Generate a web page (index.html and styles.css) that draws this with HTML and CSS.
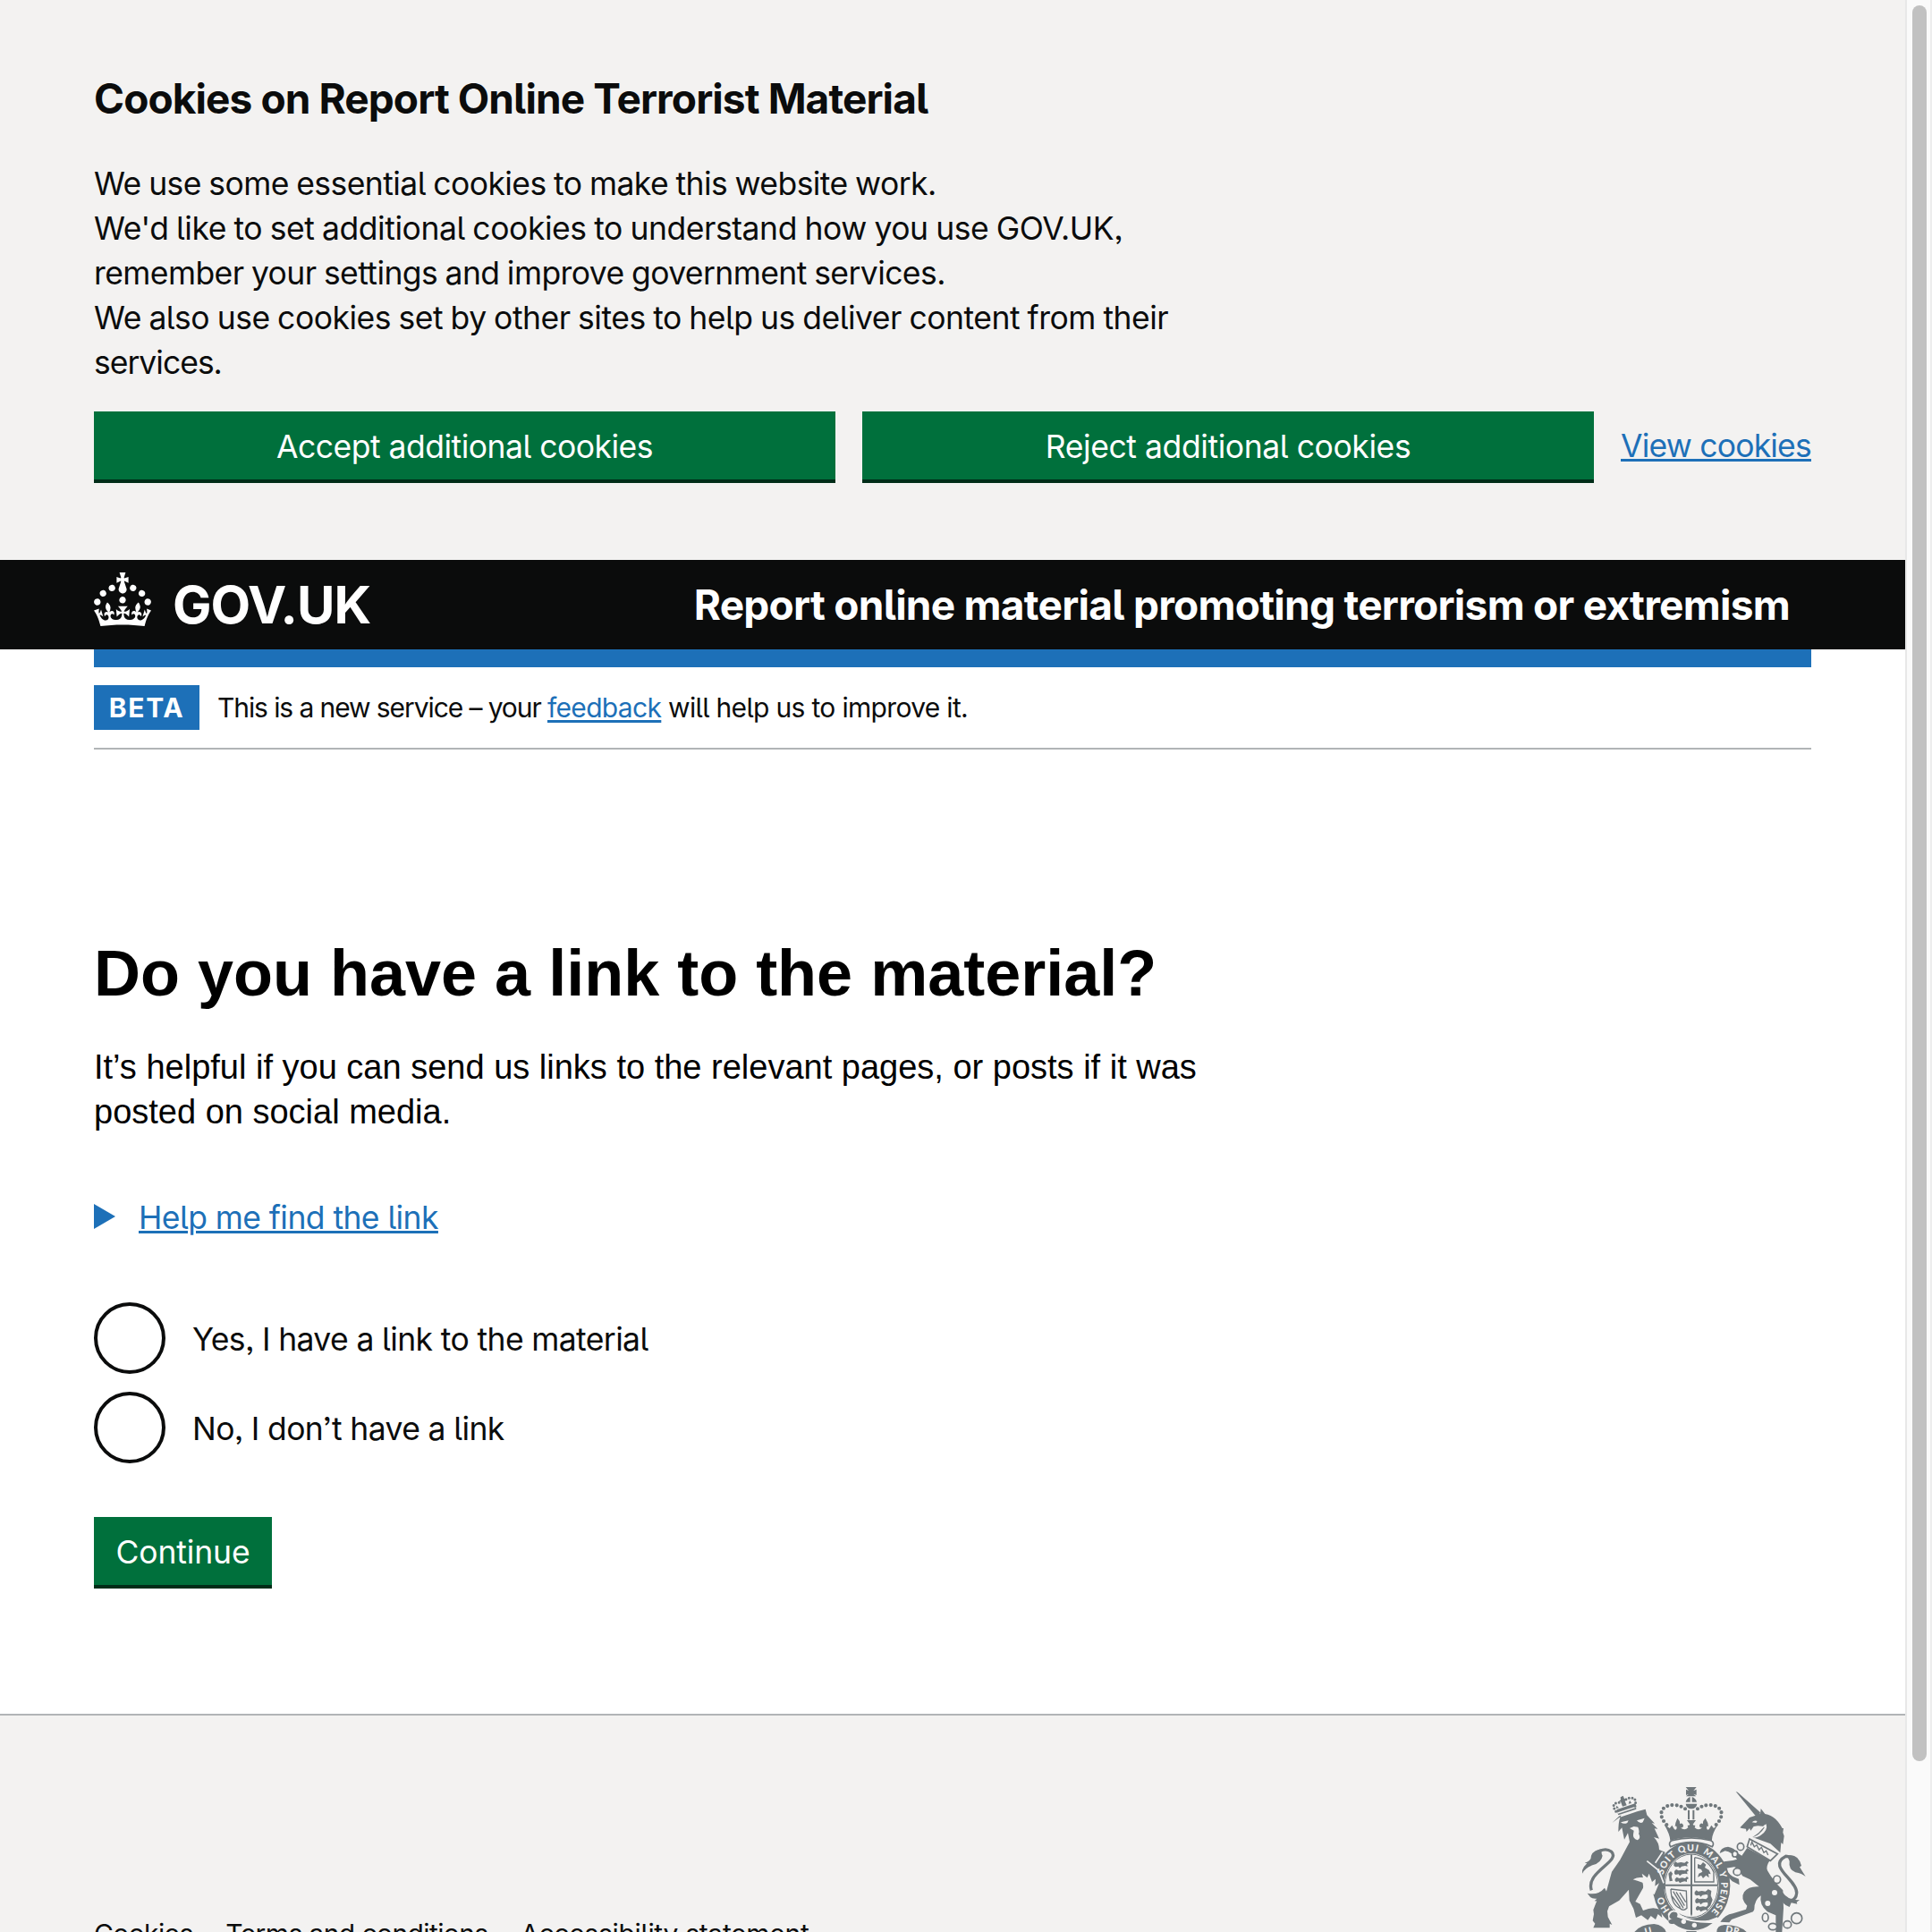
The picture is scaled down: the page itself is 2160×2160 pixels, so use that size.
FILE: index.html
```
<!DOCTYPE html>
<html lang="en">
<head>
<meta charset="utf-8">
<title>Do you have a link to the material?</title>
<link rel="stylesheet" href="styles.css">
</head>
<body>
<div class="page">
  <section class="cookies">
    <h2 class="cookies-title">Cookies on Report Online Terrorist Material</h2>
    <p class="cookies-text">
      <span class="line l1">We use some essential cookies to make this website work.</span>
      <span class="line l2">We'd like to set additional cookies to understand how you use GOV.UK,</span>
      <span class="line l3">remember your settings and improve government services.</span>
      <span class="line l4">We also use cookies set by other sites to help us deliver content from their</span>
      <span class="line l5">services.</span>
    </p>
    <div class="cookies-actions">
      <button class="button accept">Accept additional cookies</button>
      <button class="button reject">Reject additional cookies</button>
      <a class="link view" href="#">View cookies</a>
    </div>
  </section>

  <header class="header">
    <a class="logo" href="#">
      <svg class="crown" viewBox="0 0 32 30" fill="currentColor" aria-hidden="true"><path d="M22.6 10.4c-1 .4-2-.1-2.4-1-.4-.9.1-2 1-2.4.9-.4 2 .1 2.4 1s-.1 2-1 2.4m-5.9 6.7c-.9.4-2-.1-2.4-1-.4-.9.1-2 1-2.4.9-.4 2 .1 2.4 1s-.1 2-1 2.4m10.8-3.7c-1 .4-2-.1-2.4-1-.4-.9.1-2 1-2.4.9-.4 2 .1 2.4 1s0 2-1 2.4m3.3 4.8c-1 .4-2-.1-2.4-1-.4-.9.1-2 1-2.4.9-.4 2 .1 2.4 1s-.1 2-1 2.4M17 4.7l2.3 1.2V2.5l-2.3.7-.2-.2.9-3h-3.4l.9 3-.2.2c-.1.1-2.3-.7-2.3-.7v3.4L15 4.7c.1.1.1.2.2.2l-1.3 4c-.1.2-.1.4-.1.6 0 1.1.8 2 1.9 2.2h.7c1-.2 1.9-1.1 1.9-2.1 0-.2 0-.4-.1-.6l-1.3-4c-.1-.2 0-.2.1-.3m-7.6 5.7c.9.4 2-.1 2.4-1 .4-.9-.1-2-1-2.4-.9-.4-2 .1-2.4 1s0 2 1 2.4m-5 3c.9.4 2-.1 2.4-1 .4-.9-.1-2-1-2.4-.9-.4-2 .1-2.4 1s.1 2 1 2.4m-3.2 4.8c.9.4 2-.1 2.4-1 .4-.9-.1-2-1-2.4-.9-.4-2 .1-2.4 1s0 2 1 2.4m14.8 11c4.4 0 8.6.3 12.3.8 1.1-4.5 2.4-7 3.7-8.8l-2.5-.9c.2 1.3.3 1.9 0 2.7-.4-.4-.8-1.1-1.1-2.3l-1.2 4c.7-.5 1.3-.8 2-.9-1.1 2.5-2.6 3.1-3.5 3-1.1-.2-1.7-1.2-1.5-2.1.3-1.2 1.5-1.5 2.1-.1 1.1-2.3-.8-3-2-2.3 1.9-1.9 2.1-3.5.6-5.6-2.1 1.6-2.1 3.2-1.2 5.5-1.2-1.4-3.2-.6-2.5 1.6.9-1.4 2.1-.5 1.9.8-.2 1.1-1.7 2.1-3.5 1.9-2.7-.2-2.9-2.1-2.9-3.6.7-.1 1.9.5 2.9 1.9l.4-4.3c-1.1 1.1-2.1 1.4-3.2 1.4.4-1.2 2.1-3 2.1-3h-5.4s1.7 1.9 2.1 3c-1.1 0-2.1-.2-3.2-1.4l.4 4.3c1-1.4 2.2-2 2.9-1.9-.1 1.5-.2 3.4-2.9 3.6-1.9.2-3.4-.8-3.5-1.9-.2-1.3 1-2.2 1.9-.8.7-2.3-1.2-3-2.5-1.6.9-2.2.9-3.9-1.2-5.5-1.5 2-1.3 3.7.6 5.6-1.2-.7-3.1 0-2 2.3.6-1.4 1.8-1.1 2.1.1.2.9-.3 1.9-1.5 2.1-.9.2-2.4-.5-3.5-3 .6 0 1.2.3 2 .9l-1.2-4c-.3 1.1-.7 1.9-1.1 2.3-.3-.8-.2-1.4 0-2.7l-2.9.9C1.3 23 2.6 25.5 3.7 30c3.7-.5 7.9-.8 12.3-.8"/></svg>
      <span class="logo-text">GOV.UK</span>
    </a>
    <span class="service">Report online material promoting terrorism or extremism</span>
  </header>

  <div class="container">
    <div class="phase">
      <strong class="tag">BETA</strong>
      <span class="phase-text"><span class="phase-start">This is a new service – your </span><a class="link" href="#">feedback</a> will help us to improve it.</span>
    </div>
    <main class="main">
      <h1 class="title">Do you have a link to the material?</h1>
      <p class="lead">It’s helpful if you can send us links to the relevant pages, or posts if it was posted on social media.</p>
      <div class="details">
        <svg class="arrow" viewBox="0 0 24 28" aria-hidden="true"><path d="M0 0L24 14L0 28Z" fill="currentColor"/></svg>
        <a class="link help" href="#">Help me find the link</a>
      </div>
      <div class="radios">
        <label class="radio"><span class="ring"></span><span class="radio-text">Yes, I have a link to the material</span></label>
        <label class="radio"><span class="ring"></span><span class="radio-text">No, I don’t have a link</span></label>
      </div>
      <button class="button continue">Continue</button>
    </main>
  </div>

  <footer class="footer">
    <nav class="footer-links">
      <a href="#">Cookies</a>
      <a href="#">Terms and conditions</a>
      <a href="#" class="statement">Accessibility statement</a>
    </nav>
    <svg class="arms" viewBox="87 288 756 492" aria-hidden="true">
      <defs>
        <path id="garter" d="M453 742C398 742 353 690 353 625S398 508 453 508S553 560 553 625S508 742 453 742"/>
        <g id="lions">
          <path d="M0 8l6-6 6 4 12-2 12 2 8-6 6 6-6 4 2 8-8-2-12 2-6 6-4-6-10 2-6-4zM2 34l6-6 8 4 10-2 12 2 6-6 6 6-6 4 2 8-8-2-10 2-8 6-4-6-10 2-4-4zM4 60l6-6 8 4 10-2 10 2 6-6 6 6-6 4 0 8-8-2-8 2-8 4-4-6-8 2-4-4z"/>
        </g>
      </defs>
      <g class="ink">
        <!-- garter, quartered shield -->
        <ellipse cx="453" cy="625" rx="130" ry="147"/>
        <ellipse class="gap" cx="453" cy="625" rx="92" ry="109"/>
        <ellipse class="ring-line" cx="453" cy="625" rx="89" ry="106"/>
        <path d="M450 520h6v200l-3 8-3-8zM366 620h174v6H366z"/>
        <use href="#lions" x="394" y="542"/>
        <use href="#lions" x="464" y="638"/>
        <path d="M376 584l8-8 6 8-4 10 4 14-10 2z"/>
        <path d="M508 636l12 6-2 16 6 14-8 22-8 2z"/>
        <path class="hair" d="M464 530V612H528V580Q510 536 464 530M384 636L436 642L438 700Q426 712 414 700Q386 690 384 636M392 644L426 700M402 646L430 692M414 648L434 680M388 660L416 698"/>
        <path d="M474 552l10 4 8-10 10 8-4 10 14 8 6 14-8-2 2 14-10-8-10 10-6-10-12 6 4-12 12-6-4-8-12-4z"/>
        <!-- garter buckle -->
        <path class="gap" d="M374 720Q384 702 408 710L416 722Q460 748 512 740L540 730L548 744L516 764L480 778H420L378 752Z"/>
        <path d="M380 724Q386 708 402 714Q410 720 404 730Q456 752 524 750Q490 776 456 774Q420 772 394 752Q378 756 376 744Q380 736 390 738Q376 734 380 724Z"/>
        <circle class="gap" cx="427" cy="745" r="8"/><circle class="gap" cx="463" cy="757" r="8"/>
        <!-- crown -->
        <path d="M434 294h36l-10 12 10-4v19l-10-4 9 8h-34l9-8-9 4v-19l9 4zM434 344q4-14 15-17v17zM471 344q-4-14-16-17v17zM434 350h38q-2 16-19 17-17-1-19-17zM441 371h6v32h-6zM457 371h6v32h-6zM364 420l16 12 8-10 8 14q8 4 8-6 0-8-6-4l2-12 6-16q10 10 8 20 8-6 12 4 0 10-10 8 14 12 26 0l-2-8h26l-2 8q12 12 26 0-10 2-10-8 4-10 12-4-2-10 8-20l8 16 2 12q-6-4-6 4 0 10 8 6l8-14 8 10 14-12q-22 34-20 54-74-22-140 0 0-20-20-54zM438 405h30l-10 14 8 8h-26l8-8z"/>
        <path class="gap band" d="M388 473Q453 456 518 473Q532 480 523 494Q453 464 383 494Q374 480 388 473Z"/>
        <path class="beads" d="M370 420C340 390 348 356 390 354Q418 354 436 370M536 420C566 390 558 356 516 354Q488 354 470 370"/>
        <!-- lion -->
        <path d="M187 414l24-18 60-20 28-8 5 20 26 28-10-2 20 20-11-1 16 34-18-5q18 18 18 42l20 8-12 32 8 28 4 60-16 20-20 2-10-14 4-8-20-2 4-10-14-6 14-14-22-2q8 20 6 34l-26 46 16 8 10 22q38-16 60 0l4 24-14-12-8 18-16-12-10 14-22-16-18 8-8-30-14-28-2-36-32 36-34 20-6 16 2 20 14 26-8-4 0 14H124l6-14-8-10 4-22-2-14 14-36 26-12 22-80 28-40 32-60-6-30-12 22-8-40-12 14q0-42 10-56l-8 4z"/>
        <path class="gap" d="M257 604q18-10 34-6l-4-14 18 14 6-14 10 28 12-10-2 24 14-10-16 38-12-4-14-18-14-18q-14-4-32-10zM216 412l26-6-4 8q-12 6-22-2zM270 406l26-8-6 14q-10 6-20-6zM246 432l14-6 14 2q6 16 2 22 10 16-4 22-16-6-14-20l2-12z"/>
        <path class="cut" d="M304 542l40 32 16 42M332 548l24-36"/>
        <path d="M202 370l64-22 2 20-60 20zM215 328l9-5 4 10 8 2-6 6 6 14-14 4-6-16-6-2 6-4zM200 366l2-10 8 8zM242 350l4-12 6 10z"/>
        <path class="cut thin" d="M206 381l60-20"/>
        <path class="beads small" d="M200 376Q182 350 206 346L216 346M264 358Q272 328 246 330L232 336"/>
        <path class="tail" d="M118 640C96 578 220 542 184 510Q168 498 146 508"/>
        <path class="tailfill" d="M87 584q-4-16 16-34l-8-2q22-6 22-24 8-20 36-22-4 12 2 22-4 24-34 32-26 10-34 28zM104 650q36 8 58-18l10 20q-12 26-44 24l8-8q-20 2-26-10z"/>
        <!-- unicorn -->
        <path d="M602 309l6 2 76 68-4 14-8 2zM616 430l32-34 36-12 2-18 14 18q34 4 58 48l4 0-2 14 4 12-4 28-6-6-3 34-33-30-60-22 20-14 20-22-22-2-14 2-10 14-4-8-10 12-2-10-14-2z"/>
        <path class="gap" d="M656 412q8-8 18-4l-4 6zM694 424l10-6q6 20-16 36-14 12-36 10 30-6 46-34z"/>
        <path d="M640 498L716 540Q702 560 708 574Q728 610 760 640L762 700L757 780H736V724L708 712Q680 690 686 658Q664 672 664 704L660 712L588 738L580 748L550 746Q566 722 592 718L636 704L640 692Q616 668 630 646Q644 626 680 628L650 604L624 592Q608 560 596 562L570 566Q572 580 592 594L612 602L614 622L590 610Q560 580 556 562L562 544L592 540L606 536Q590 512 566 508L548 516Q550 496 576 494Q598 498 606 514L622 524Z"/>
        <path class="gap line3" d="M648 468L640 494L718 541L742 518Z"/>
        <path class="hair" d="M652 490l4-12 8 16 8-6 8 16 8-8 8 18 8-6 6 14"/>
        <circle class="gap" cx="732" cy="648" r="9"/><circle class="gap" cx="709" cy="684" r="9"/>
        <g class="gap rings"><ellipse cx="618" cy="494" rx="11" ry="12"/><ellipse cx="599" cy="518" rx="9" ry="10"/><ellipse cx="607" cy="578" rx="13" ry="12"/><ellipse cx="740" cy="604" rx="12" ry="13"/><ellipse cx="701" cy="731" rx="10" ry="14"/><ellipse cx="726" cy="762" rx="14" ry="11"/><ellipse cx="775" cy="755" rx="13" ry="12"/><circle cx="806" cy="734" r="18"/></g>
        <path class="tail" d="M786 674Q804 672 806 650C810 606 704 560 770 526L796 530"/>
        <path d="M774 524q38-8 48 34l-6 4 20 32q-12-10-34-14-24-10-20-38zM758 646q20 30 58 26l-10 8 2 6-20-4-6 14q-24-6-32-38z"/>
        <!-- motto ribbons -->
        <path d="M262 780q20-26 66-27 32 4 40 27zM538 780q0-22 26-24 50 0 74 24zM436 777h34v3h-34z"/>
      </g>
      <g class="motto">
        <text><textPath href="#garter" startOffset="83">HO</textPath></text>
        <text><textPath href="#garter" startOffset="207">SOIT</textPath></text>
        <text><textPath href="#garter" startOffset="299">QUI</textPath></text>
        <text><textPath href="#garter" startOffset="380">MAL</textPath></text>
        <text><textPath href="#garter" startOffset="466">Y</textPath></text>
        <text><textPath href="#garter" startOffset="500">PENSE</textPath></text>
        <text transform="translate(299 790) rotate(-14)">U</text>
        <text transform="translate(566 780) rotate(12)">DR</text>
      </g>
    </svg>
  </footer>
</div>
<div class="scrollbar"><div class="thumb"></div></div>
</body>
</html>
```
FILE: styles.css
```
* { box-sizing: border-box; }

body {
  margin: 0;
  height: 2160px;
  display: flex;
  overflow: hidden;
  background: #fff;
  color: #0b0c0c;
  font: 35.5px/50px Inter, "Liberation Sans", sans-serif;
  font-feature-settings: "cv05", "ss03";
  letter-spacing: -0.6px;
}

h1, h2, p { margin: 0; }

.page { width: 2130px; height: 2160px; overflow: hidden; }

.link {
  color: #1d70b8;
  text-decoration: underline;
  text-decoration-thickness: 3px;
  text-underline-offset: 3px;
}

.button {
  height: 80px;
  padding: 3px 24px 0;
  border: 0;
  border-bottom: 4px solid #002d18;
  background: #00703c;
  color: #fff;
  font: inherit;
  font-feature-settings: inherit;
  letter-spacing: inherit;
  text-align: center;
}

/* Cookie banner */
.cookies { height: 626px; padding: 80px 105px 0; background: #f3f2f1; }
.cookies-title { margin-bottom: 41px; font-size: 46px; line-height: 60px; font-weight: 700; letter-spacing: -0.9px; }
.cookies-text { margin-bottom: 29px; }
.line { display: block; white-space: nowrap; word-spacing: -1px; }
.l1 { letter-spacing: -0.57px; }
.l2 { letter-spacing: -0.44px; }
.l3 { letter-spacing: -0.58px; }
.l4 { letter-spacing: -0.49px; }
.l5 { letter-spacing: -1px; }
.cookies-actions { display: flex; gap: 30px; }
.accept { width: 829px; letter-spacing: -0.5px; }
.reject { width: 818px; letter-spacing: -0.41px; }
.view { line-height: 78px; white-space: nowrap; letter-spacing: -0.8px; text-underline-offset: 2px; }

/* Header */
.header {
  height: 100px;
  padding: 0 129px 1px 105px;
  display: flex;
  align-items: center;
  justify-content: space-between;
  background: #0b0c0c;
  color: #fff;
}
.logo { display: flex; align-items: center; gap: 24px; color: inherit; text-decoration: none; }
.crown { width: 64px; height: 60px; margin-top: -11px; }
.logo-text { font-size: 58px; line-height: 70px; font-weight: 700; letter-spacing: -1px; }
.service { font-size: 46px; font-weight: 700; letter-spacing: -0.73px; }

/* Content */
.container { padding: 0 105px; }
.phase {
  height: 112px;
  padding-top: 20px;
  border-top: 20px solid #1d70b8;
  border-bottom: 2px solid #b1b4b6;
  display: flex;
  align-items: flex-start;
  gap: 20px;
  font-size: 30px;
}
.tag { width: 118px; height: 50px; background: #1d70b8; color: #fff; text-align: center; letter-spacing: 1.7px; }
.phase-text { letter-spacing: -0.67px; }
.phase-start { letter-spacing: -1.09px; }
.main {
  padding-top: 210px;
  height: 1078px;
}
.title { color: #000; font: 700 72px/80px "Liberation Sans", Arial, sans-serif; letter-spacing: 0; }
.lead { width: 1280px; margin: 40px 0 69px; color: #000; font: 38px/50px "Liberation Sans", Arial, sans-serif; letter-spacing: 0; }
.details { display: flex; align-items: center; gap: 26px; color: #1d70b8; }
.arrow { width: 24px; height: 28px; margin-top: -4px; }
.help { letter-spacing: -0.57px; text-underline-offset: 2px; }
.radios { margin: 69px 0 60px; display: flex; flex-direction: column; gap: 20px; }
.radio { height: 80px; display: flex; align-items: center; gap: 30px; }
.ring { width: 80px; height: 80px; border: 4px solid #0b0c0c; border-radius: 50%; }
.radio-text { padding-top: 4px; letter-spacing: -0.62px; }
.continue { width: 199px; letter-spacing: -0.13px; }

/* Footer */
.footer {
  height: 244px;
  padding: 78px 109px 0 105px;
  display: flex;
  justify-content: space-between;
  align-items: flex-start;
  border-top: 2px solid #b1b4b6;
  background: #f3f2f1;
}
.footer-links { display: flex; gap: 36.5px; margin-top: 146px; font-size: 30px; line-height: 40px; }
.footer-links a { color: inherit; text-decoration: none; }
.footer-links .statement { letter-spacing: -0.3px; }
.arms { width: 252px; height: 164px; }
.ink { fill: #6f777b; }
.gap, .motto { fill: #f3f2f1; }
.motto { font: 900 31px Lato, sans-serif; letter-spacing: 3px; }
.ring-line { fill: none; stroke: #6f777b; stroke-width: 3; }
.hair { fill: none; stroke: #6f777b; stroke-width: 4; }
.band, .line3, .rings { stroke: #6f777b; stroke-width: 5; }
.cut { fill: none; stroke: #f3f2f1; stroke-width: 5; }
.thin { stroke-width: 4; }
.beads { fill: none; stroke: #6f777b; stroke-width: 12.5; stroke-linecap: round; stroke-dasharray: 0 15.5; }
.small { stroke-width: 9; stroke-dasharray: 0 11; }
.tail { fill: none; stroke: #6f777b; stroke-width: 10; }

/* Scrollbar */
.scrollbar {
  width: 30px;
  padding: 6px 4px 0 6px;
  border-left: 2px solid #e8e8e8;
  border-right: 2px solid #ededed;
  background: #fafafa;
}
.thumb { width: 16px; height: 1963px; border-radius: 8px; background: #c1c1c1; }
```
